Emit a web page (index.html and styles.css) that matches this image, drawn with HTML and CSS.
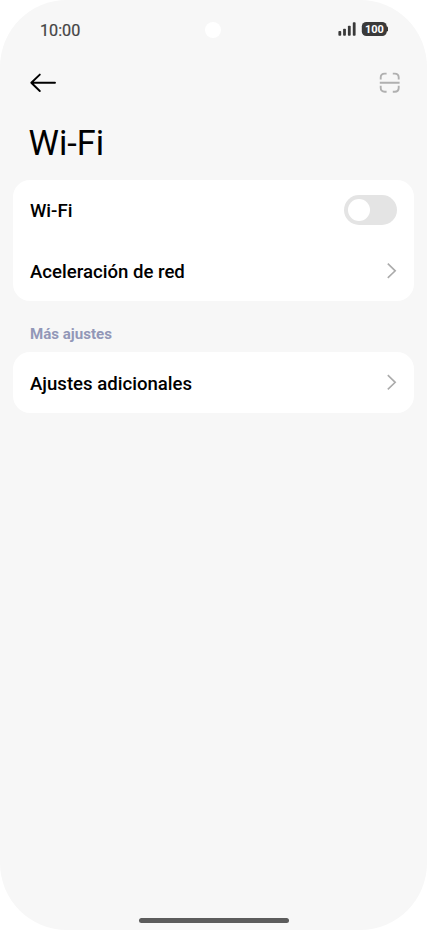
FILE: index.html
```html
<!DOCTYPE html>
<html lang="es">
<head>
<meta charset="utf-8">
<title>Wi-Fi</title>
<link rel="stylesheet" href="styles.css">
</head>
<body>
<div class="phone">
  <header class="status">
    <span class="time">10:00</span>
    <span class="camera"></span>
    <svg class="indicators" width="52" height="18" viewBox="0 0 52 18">
      <g fill="#3a3a3a">
        <rect x="1.4" y="11" width="2.8" height="4.7" rx=".8"/>
        <rect x="6.1" y="8.7" width="2.8" height="7" rx=".8"/>
        <rect x="10.9" y="5.7" width="2.8" height="10" rx=".8"/>
        <rect x="15.8" y="2.2" width="2.8" height="13.5" rx=".8"/>
        <rect x="24.8" y="2" width="25" height="14" rx="4.6"/>
        <path d="M49 6.5h.8q1.2 0 1.2 1.2v2.6q0 1.2-1.2 1.2h-.8z"/>
      </g>
      <text class="level" x="37.4" y="12.7" text-anchor="middle">100</text>
    </svg>
  </header>
  <nav class="toolbar">
    <svg width="28" height="22" viewBox="0 0 28 22" fill="none" stroke="#000" stroke-width="1.9" stroke-linecap="round" stroke-linejoin="round"><path d="M26 10.8H2.3M10.8 2.6L2.3 10.8L10.8 19"/></svg>
    <svg width="22" height="22" viewBox="0 0 22 22" fill="none" stroke="#b0b0b0" stroke-width="1.9"><path d="M1.7 7.6V5.6Q1.7 1.6 5.7 1.6H7.6M13.8 1.6H15.7Q19.7 1.6 19.7 5.6V7.6M19.7 13.8V15.7Q19.7 19.7 15.7 19.7H13.8M7.6 19.7H5.7Q1.7 19.7 1.7 15.7V13.8M.8 10.7H20.6"/></svg>
  </nav>
  <main>
    <h1>Wi-Fi</h1>
    <section class="card">
      <div class="row"><span class="label">Wi-Fi</span><span class="switch"></span></div>
      <div class="row"><span class="label">Aceleración de red</span><svg class="chevron" width="10" height="18" viewBox="0 0 10 18"><path d="M.8 1.7L8.2 8.8L.8 15.9"/></svg></div>
    </section>
    <h2>Más ajustes</h2>
    <section class="card">
      <div class="row"><span class="label low">Ajustes adicionales</span><svg class="chevron" width="10" height="18" viewBox="0 0 10 18"><path d="M.8 2.2L8.2 9.3L.8 16.4"/></svg></div>
    </section>
  </main>
  <div class="home"></div>
</div>
</body>
</html>
```
FILE: styles.css
```css
* { box-sizing: border-box; }
body { margin: 0; background: #fff; font-family: Roboto, sans-serif; color: #000; }
.phone {
  width: 427px; height: 930px; border-radius: 67px; background: #f7f7f7;
  display: flex; flex-direction: column; overflow: hidden;
}
.status {
  height: 60px; padding: 0 38px 1px 40px;
  display: grid; grid-template-columns: 165.2px 16px 1fr; align-items: center;
}
.time { padding-top: 1px; font-size: 16.2px; color: #444; -webkit-text-stroke: .2px #444; }
.camera { width: 16px; height: 16px; border-radius: 50%; background: #fff; }
.indicators { justify-self: end; margin-top: -1px; }
.level { font-size: 11px; font-weight: 700; fill: #fff; }
.toolbar {
  height: 46px; padding: 0 26px 0 29px;
  display: flex; align-items: center; justify-content: space-between;
}
main { padding: 0 13px; }
h1 { margin: 14px 0 0; padding: 1px 0 0 15.5px; height: 60px; line-height: 45px; font-size: 34.3px; font-weight: 400; }
.card { background: #fff; border-radius: 17px; }
.row {
  height: 60.5px; padding: 0 17px; font-size: 18.6px; font-weight: 500;
  display: flex; align-items: center; justify-content: space-between;
}
.label { padding-top: 2px; }
.low { padding-top: 3px; }
.switch { width: 53.5px; height: 30.5px; margin-top: -1px; padding: 4px; border-radius: 16px; background: #e4e4e4; }
.switch::before { content: ""; display: block; width: 22.5px; height: 22.5px; border-radius: 50%; background: #fff; }
.chevron { fill: none; stroke: #ababab; stroke-width: 1.6; }
h2 { margin: 0; padding: 8px 17px 0; height: 51px; line-height: 51px; font-size: 15.1px; font-weight: 700; color: #9297b8; }
.home { width: 150px; height: 5px; margin: auto 138.5px 7px; border-radius: 3px; background: #5c5c5c; }
```
